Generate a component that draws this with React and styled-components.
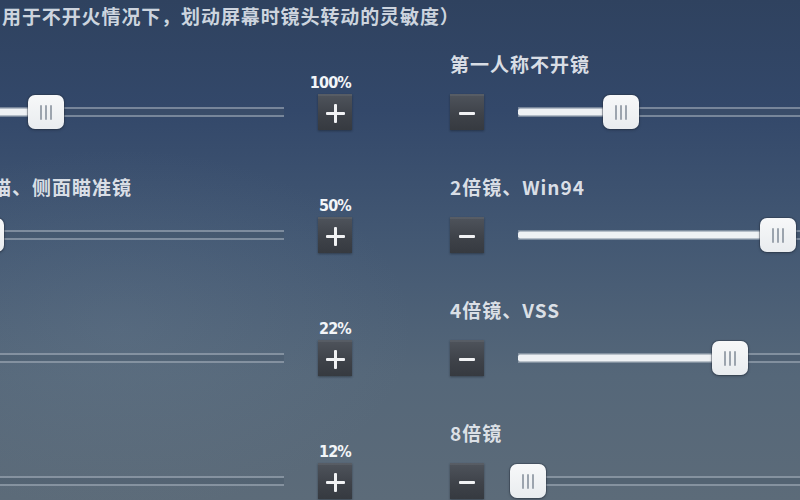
import React from "react";
import styled, { createGlobalStyle } from "styled-components";

const Global = createGlobalStyle`
  html, body { margin: 0; padding: 0; background: #2e405c; }
  #root { width: 800px; height: 500px; }
`;

const Screen = styled.div`
  width: 800px;
  height: 500px;
  overflow: hidden;
  background:
    radial-gradient(ellipse 420px 260px at 120px 330px, rgba(120, 140, 160, 0.18), transparent 70%),
    linear-gradient(180deg, #2f425f 0%, #33486a 22%, #435873 48%, #556779 75%, #5c6b79 100%);
  font-family: "Noto Sans CJK SC", "Noto Sans", sans-serif;
  color: #e4e8ee;
`;

const Hint = styled.div`
  padding: 4px 0 0 2px;
  font-size: 19px;
  line-height: 24px;
  font-weight: 700;
  letter-spacing: 0.9px;
  white-space: nowrap;
  color: rgba(222, 228, 236, 0.92);
`;

const Columns = styled.div`
  display: grid;
  grid-template-columns: 500px 500px;
  column-gap: 98px;
  margin: 24px 0 0 -148px;
`;

const Column = styled.div`
  display: flex;
  flex-direction: column;
  gap: 45px;
`;

const Setting = styled.div`
  display: grid;
  grid-template-columns: 34px 1fr 34px;
  grid-template-rows: 24px 36px;
  column-gap: 34px;
  row-gap: 18px;
  align-items: center;
`;

const Label = styled.div`
  grid-column: 1 / -1;
  font-size: 19px;
  line-height: 24px;
  font-weight: 700;
  letter-spacing: 1px;
  white-space: nowrap;
  color: rgba(228, 232, 238, 0.94);
`;

const StepButton = styled.div`
  position: relative;
  width: 34px;
  height: 36px;
  display: flex;
  align-items: center;
  justify-content: center;
  background: linear-gradient(180deg, #4d525a 0%, #3e4249 55%, #363a40 100%);
  border-top: 2px solid rgba(150, 158, 168, 0.35);
  box-sizing: border-box;
  box-shadow: 0 1px 2px rgba(20, 25, 32, 0.45);
`;

const Bar = styled.span`
  position: absolute;
  background: #f1f2f4;
  border-radius: 1px;
  width: ${(p) => (p.$vertical ? "3px" : p.$minus ? "16px" : "19px")};
  height: ${(p) => (p.$vertical ? "19px" : "3px")};
`;

const Percent = styled.span`
  position: absolute;
  right: 1px;
  bottom: calc(100% + 6px);
  font-family: "DejaVu Sans Condensed", "DejaVu Sans", "Liberation Sans", sans-serif;
  font-stretch: condensed;
  font-size: 16px;
  line-height: 15px;
  font-weight: 700;
  letter-spacing: -0.8px;
  color: #f2f5f8;
  white-space: nowrap;
`;

const Track = styled.div`
  position: relative;
  height: 36px;
  display: flex;
  align-items: center;
`;

const Rail = styled.div`
  width: 100%;
  height: 10px;
  box-sizing: border-box;
  border-top: 2px solid rgba(195, 205, 216, 0.45);
  border-bottom: 2px solid rgba(195, 205, 216, 0.45);
  background: rgba(70, 86, 104, 0.35);
`;

const Fill = styled.div`
  position: absolute;
  left: 0;
  top: 50%;
  height: 7px;
  transform: translateY(-50%);
  background: #eef1f4;
  border-radius: 2px 0 0 2px;
`;

const Thumb = styled.div`
  position: absolute;
  top: 50%;
  width: 36px;
  height: 34px;
  transform: translate(-50%, -50%);
  box-sizing: border-box;
  border-radius: 7px;
  background: linear-gradient(180deg, #f7f8f9 0%, #e9ecef 100%);
  box-shadow: 0 0 0 1px rgba(40, 50, 62, 0.35), 0 1px 3px rgba(20, 28, 38, 0.4);
  display: flex;
  align-items: center;
  justify-content: center;
  gap: 3px;
`;

const Grip = styled.span`
  width: 2px;
  height: 15px;
  border-radius: 1px;
  background: #9ca4ae;
`;

function Stepper({ kind, value }) {
  return (
    <StepButton>
      {value && <Percent>{value}</Percent>}
      <Bar $minus={kind === "minus"} />
      {kind === "plus" && <Bar $vertical />}
    </StepButton>
  );
}

function Slider({ level }) {
  const pct = `${level * 100}%`;
  return (
    <Track>
      <Rail />
      <Fill style={{ width: pct }} />
      <Thumb style={{ left: pct }}>
        <Grip />
        <Grip />
        <Grip />
      </Thumb>
    </Track>
  );
}

function SettingRow({ label, level, value }) {
  return (
    <Setting>
      <Label>{label}</Label>
      <Stepper kind="minus" />
      <Slider level={level} />
      <Stepper kind="plus" value={value} />
    </Setting>
  );
}

const leftSettings = [
  { label: "第三人称不开镜", level: 0.346, value: "100%" },
  { label: "红点、全息、机瞄、侧面瞄准镜", level: 0.18, value: "50%" },
  { label: "3倍镜", level: 0.07, value: "22%" },
  { label: "6倍镜", level: 0.03, value: "12%" },
];

const rightSettings = [
  { label: "第一人称不开镜", level: 0.284, value: "100%" },
  { label: "2倍镜、Win94", level: 0.713, value: "300%" },
  { label: "4倍镜、VSS", level: 0.583, value: "200%" },
  { label: "8倍镜", level: 0.028, value: "10%" },
];

export default function App() {
  return (
    <>
      <Global />
      <Screen>
        <Hint>用于不开火情况下，划动屏幕时镜头转动的灵敏度）</Hint>
        <Columns>
          <Column>
            {leftSettings.map((s) => (
              <SettingRow key={s.label} {...s} />
            ))}
          </Column>
          <Column>
            {rightSettings.map((s) => (
              <SettingRow key={s.label} {...s} />
            ))}
          </Column>
        </Columns>
      </Screen>
    </>
  );
}
